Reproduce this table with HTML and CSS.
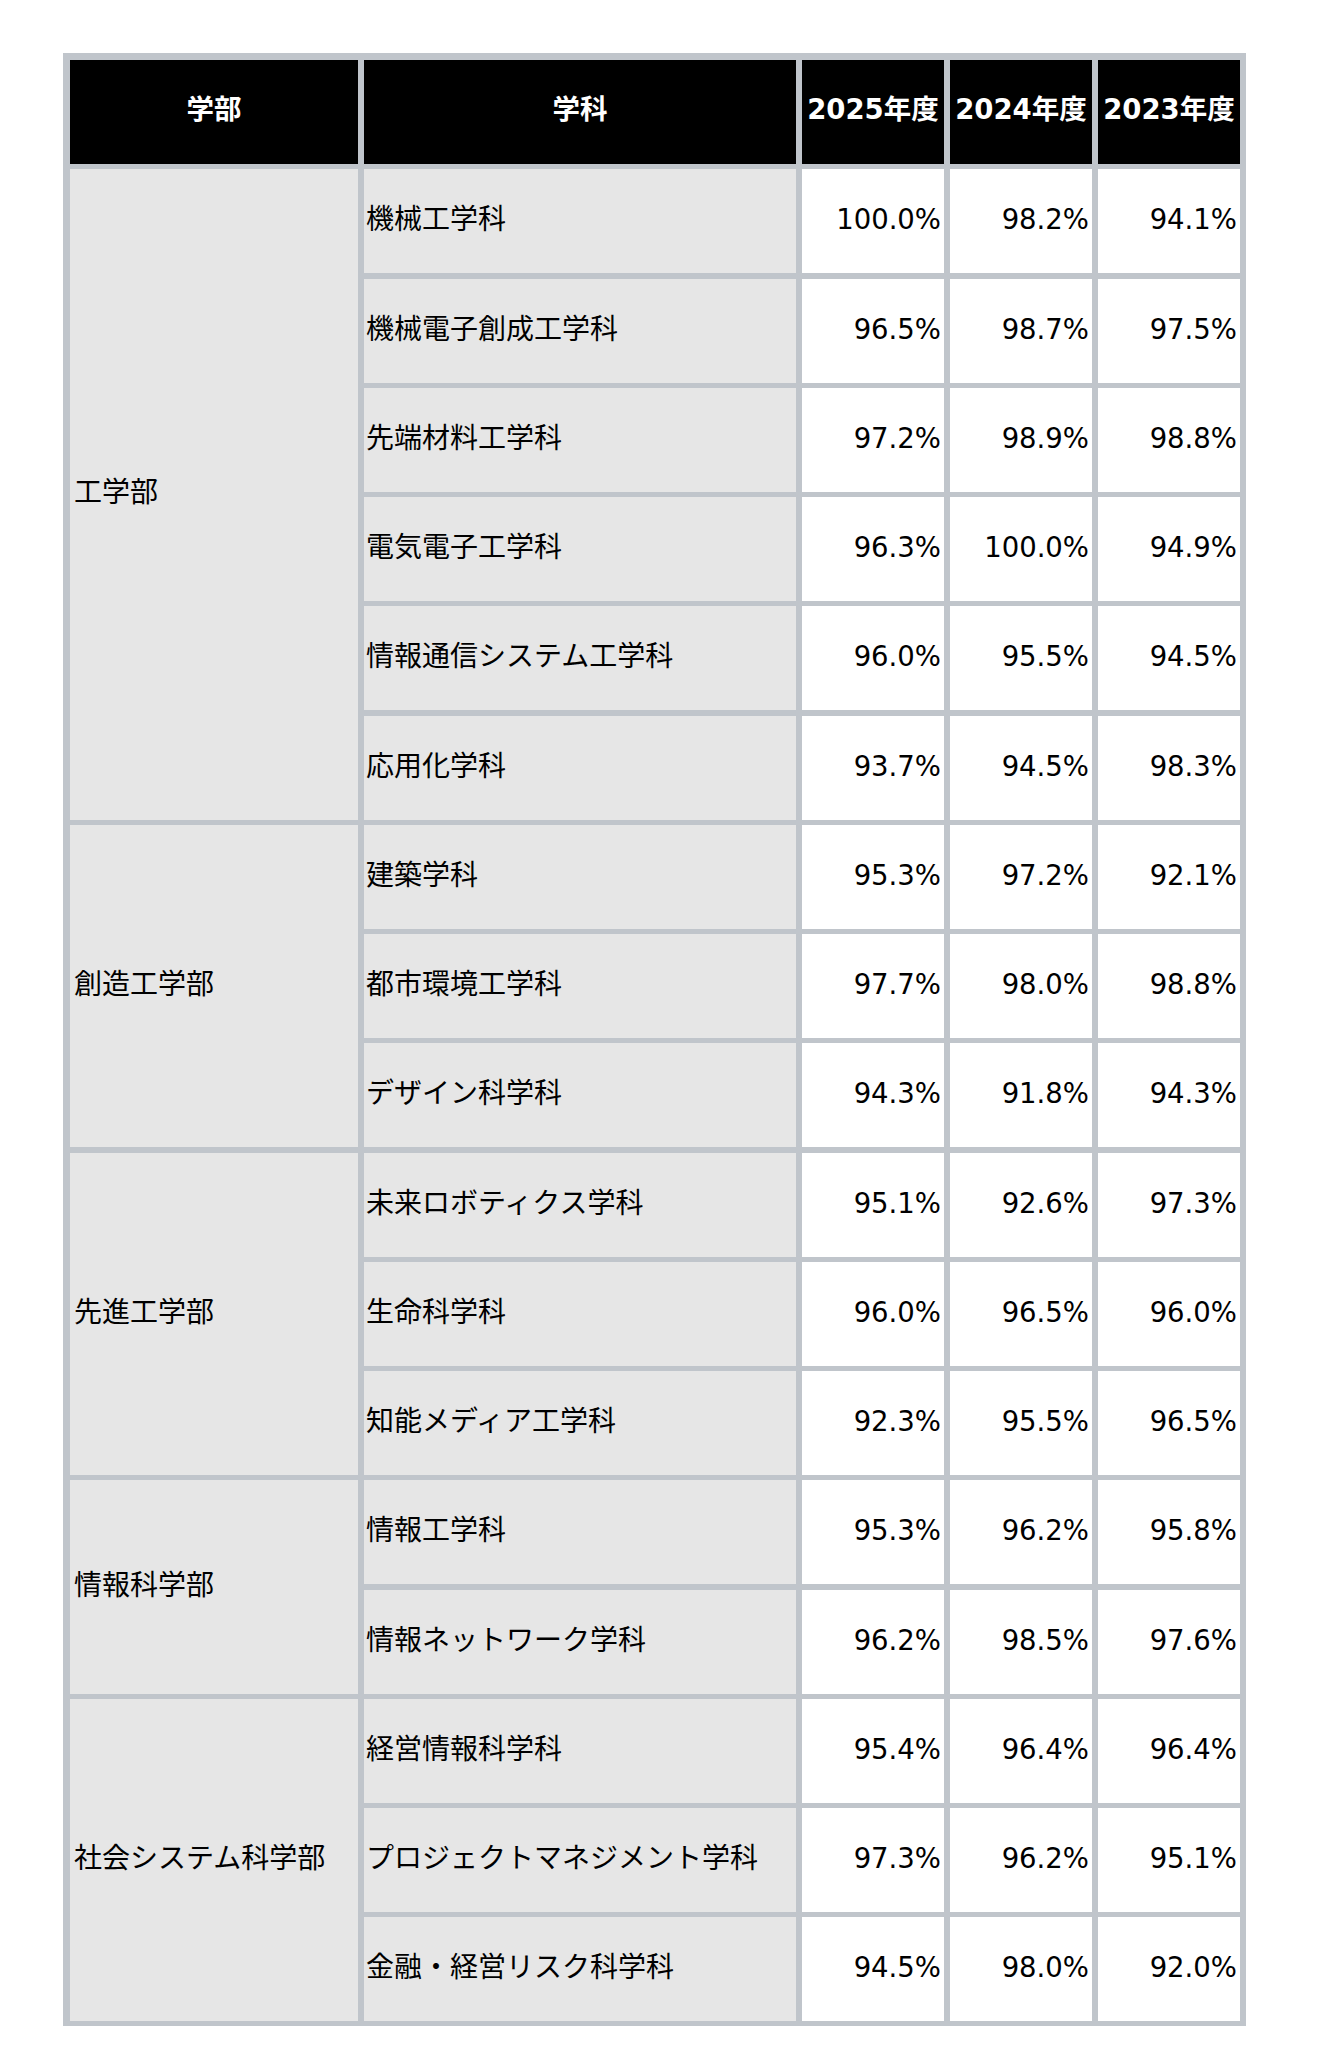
FILE: index.html
```html
<!DOCTYPE html>
<html lang="ja">
<head>
<meta charset="utf-8">
<title>学科別就職率</title>
<link rel="stylesheet" href="styles.css">
</head>
<body>
<div class="page">
  <div class="table">
    <div class="th">学部</div>
    <div class="th">学科</div>
    <div class="th">2025年度</div>
    <div class="th">2024年度</div>
    <div class="th">2023年度</div>

    <div class="fac span6">工学部</div>
    <div class="dept">機械工学科</div><div class="num">100.0%</div><div class="num">98.2%</div><div class="num">94.1%</div>
    <div class="dept">機械電子創成工学科</div><div class="num">96.5%</div><div class="num">98.7%</div><div class="num">97.5%</div>
    <div class="dept">先端材料工学科</div><div class="num">97.2%</div><div class="num">98.9%</div><div class="num">98.8%</div>
    <div class="dept">電気電子工学科</div><div class="num">96.3%</div><div class="num">100.0%</div><div class="num">94.9%</div>
    <div class="dept">情報通信システム工学科</div><div class="num">96.0%</div><div class="num">95.5%</div><div class="num">94.5%</div>
    <div class="dept">応用化学科</div><div class="num">93.7%</div><div class="num">94.5%</div><div class="num">98.3%</div>

    <div class="fac span3">創造工学部</div>
    <div class="dept">建築学科</div><div class="num">95.3%</div><div class="num">97.2%</div><div class="num">92.1%</div>
    <div class="dept">都市環境工学科</div><div class="num">97.7%</div><div class="num">98.0%</div><div class="num">98.8%</div>
    <div class="dept">デザイン科学科</div><div class="num">94.3%</div><div class="num">91.8%</div><div class="num">94.3%</div>

    <div class="fac span3">先進工学部</div>
    <div class="dept">未来ロボティクス学科</div><div class="num">95.1%</div><div class="num">92.6%</div><div class="num">97.3%</div>
    <div class="dept">生命科学科</div><div class="num">96.0%</div><div class="num">96.5%</div><div class="num">96.0%</div>
    <div class="dept">知能メディア工学科</div><div class="num">92.3%</div><div class="num">95.5%</div><div class="num">96.5%</div>

    <div class="fac span2">情報科学部</div>
    <div class="dept">情報工学科</div><div class="num">95.3%</div><div class="num">96.2%</div><div class="num">95.8%</div>
    <div class="dept">情報ネットワーク学科</div><div class="num">96.2%</div><div class="num">98.5%</div><div class="num">97.6%</div>

    <div class="fac span3">社会システム科学部</div>
    <div class="dept">経営情報科学科</div><div class="num">95.4%</div><div class="num">96.4%</div><div class="num">96.4%</div>
    <div class="dept">プロジェクトマネジメント学科</div><div class="num">97.3%</div><div class="num">96.2%</div><div class="num">95.1%</div>
    <div class="dept">金融・経営リスク科学科</div><div class="num">94.5%</div><div class="num">98.0%</div><div class="num">92.0%</div>
  </div>
</div>
</body>
</html>
```

FILE: styles.css
```css
html, body {
  margin: 0;
  padding: 0;
  background: #ffffff;
}

.page {
  padding: 53px 0 0 63px;
}

.table {
  display: inline-grid;
  grid-template-columns: 288px 432px 142px 142px 142px;
  grid-auto-rows: 104px;
  column-gap: 6px;
  row-gap: 5.25px;
  padding: 7px 6px 5px 7px;
  background: #c0c5cb;
  font-family: "DejaVu Sans", "Noto Sans CJK JP", sans-serif;
  font-size: 27.5px;
  color: #000000;
}

.table > div {
  display: flex;
  align-items: center;
  white-space: nowrap;
  overflow: hidden;
  box-sizing: border-box;
}

.th {
  background: #000000;
  color: #ffffff;
  font-weight: bold;
  justify-content: center;
  padding-bottom: 10px;
}

.fac {
  grid-column: 1;
  background: #e6e6e6;
  padding-left: 4px;
  padding-bottom: 8px;
  font-size: 28px;
}

.span6 { grid-row: span 6; }
.span3 { grid-row: span 3; }
.span2 { grid-row: span 2; }

.dept {
  grid-column: 2;
  background: #e6e6e6;
  padding-left: 2px;
  padding-bottom: 8px;
  font-size: 28px;
}

.num {
  background: #ffffff;
  justify-content: flex-end;
  padding-right: 3px;
  padding-bottom: 4px;
}
```
